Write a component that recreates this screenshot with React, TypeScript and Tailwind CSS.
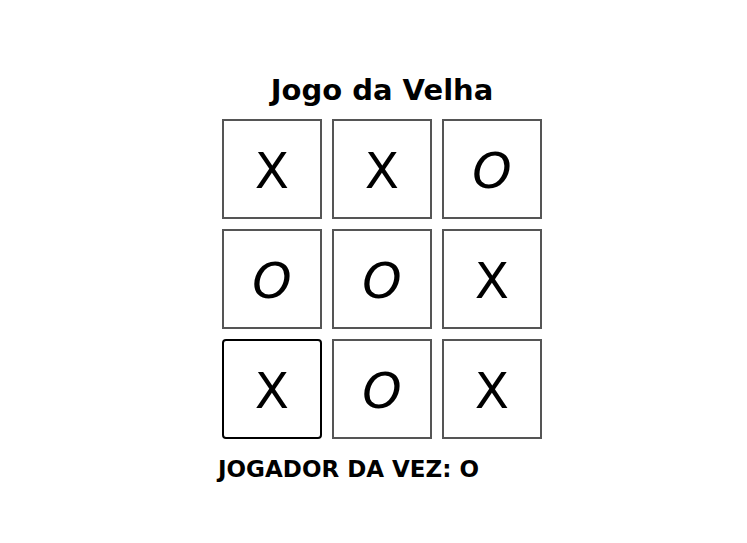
import { useState } from 'react';

const initial = ['X', 'X', 'O', 'O', 'O', 'X', 'X', 'O', 'X'];

function Cell({ value, active }: { value: string; active: boolean }) {
  return (
    <button
      className={
        active
          ? 'w-[100px] h-[100px] bg-white border-2 border-black rounded-[4px] flex items-center justify-center text-[50px] leading-none text-black pt-[3px]'
          : 'w-[100px] h-[100px] bg-white border-2 border-[#555] flex items-center justify-center text-[50px] leading-none text-black pt-[3px]'
      }
    >
      <span className={value === 'O' ? 'italic' : ''}>{value}</span>
    </button>
  );
}

export default function App() {
  const [board] = useState(initial);

  return (
    <div
      className="min-h-[543px] bg-white flex justify-center pt-[70px] pl-[17px]"
      style={{ fontFamily: '"Comic Sans MS", "DejaVu Sans", sans-serif' }}
    >
      <div className="flex flex-col w-[328px]">
        <h1 className="text-[29px] font-bold text-center leading-[40px] text-black">Jogo da Velha</h1>
        <div className="grid grid-cols-[repeat(3,100px)] gap-[10px] mt-[9px] ml-[4px]">
          {board.map((v, i) => (
            <Cell key={i} value={v} active={i === 6} />
          ))}
        </div>
        <p className="mt-[15px] text-[23px] font-bold leading-[30px] text-black">JOGADOR DA VEZ: O</p>
      </div>
    </div>
  );
}
